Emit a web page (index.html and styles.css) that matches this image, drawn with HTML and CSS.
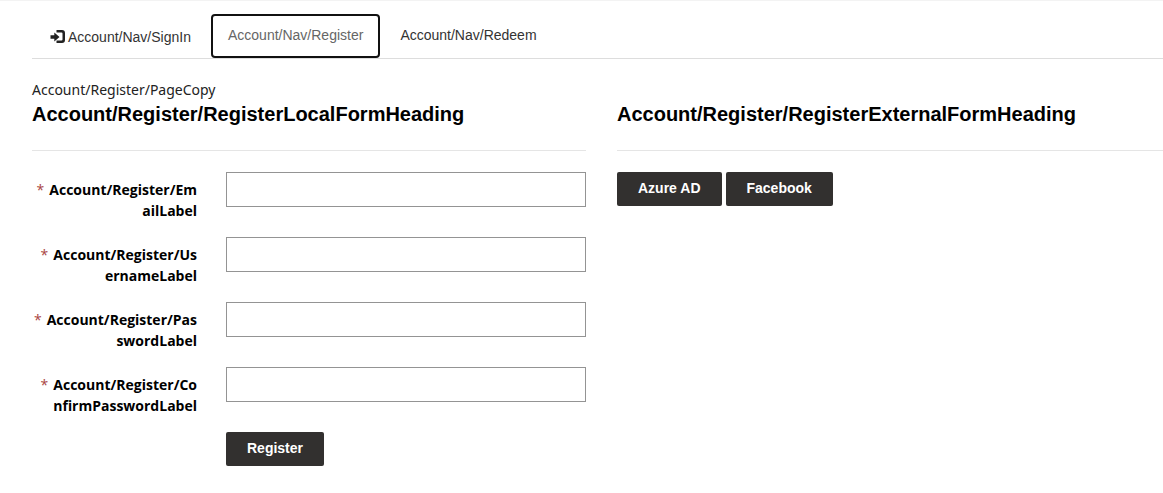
FILE: index.html
```html
<!DOCTYPE html>
<html lang="en">
<head>
<meta charset="utf-8">
<title>Register</title>
<link rel="stylesheet" href="styles.css">
</head>
<body>
<main class="page">
  <nav class="tabs">
    <a class="tab tab-signin" href="#signin"><svg class="icon" viewBox="0 0 16 14" aria-hidden="true"><path d="M.5 5.200h3.800V2.500L9.500 7 4.300 11.500V8.800H.5z"/><path d="M6.500 0H12q3 0 3 3v7q0 3-3 3H6.500v-2.400H11.500q1 0 1-1v-6q0-1-1-1H6.500z"/></svg><span>Account/Nav/SignIn</span></a>
    <a class="tab tab-active" href="#register" aria-current="page">Account/Nav/Register</a>
    <a class="tab" href="#redeem">Account/Nav/Redeem</a>
  </nav>
  <p class="copy">Account/Register/PageCopy</p>
  <div class="columns">
    <form class="local">
      <h2 class="heading">Account/Register/RegisterLocalFormHeading</h2>
      <div class="field">
        <label class="label" for="email">Account/Register/Em<br>ailLabel</label>
        <input class="input" id="email" type="email">
      </div>
      <div class="field">
        <label class="label" for="username">Account/Register/Us<br>ernameLabel</label>
        <input class="input" id="username" type="text">
      </div>
      <div class="field">
        <label class="label" for="password">Account/Register/Pas<br>swordLabel</label>
        <input class="input" id="password" type="password">
      </div>
      <div class="field">
        <label class="label" for="confirm">Account/Register/Co<br>nfirmPasswordLabel</label>
        <input class="input" id="confirm" type="password">
      </div>
      <div class="actions"><button class="button" type="button">Register</button></div>
    </form>
    <section class="external">
      <h2 class="heading">Account/Register/RegisterExternalFormHeading</h2>
      <div class="providers">
        <button class="button" type="button">Azure AD</button>
        <button class="button" type="button">Facebook</button>
      </div>
    </section>
  </div>
</main>
</body>
</html>
```
FILE: styles.css
```css
* { box-sizing: border-box; }
body {
  margin: 0;
  border-top: 1px solid #f3f3f3;
  background: #fff;
  color: #000;
  font: 14px/21px "Noto Sans", "Open Sans", sans-serif;
}
.page { padding: 13px 0 24px 32px; }
.tabs {
  display: flex;
  border-bottom: 1px solid #ddd;
  font: 14px/20px "Liberation Sans", Arial, sans-serif;
}
.tab {
  display: flex;
  align-items: center;
  height: 44px;
  padding: 0 20px 2px;
  color: #333;
  text-decoration: none;
}
.tab-signin { gap: 2px; padding: 2px 20px 0 18px; }
.tab-active {
  padding: 0 15px 2px;
  border: 2px solid #111;
  border-radius: 4px;
  color: #666;
}
.icon { width: 16px; height: 14px; fill: #222; }
.copy { margin: 20px 0 0; color: #222; }
.columns {
  display: grid;
  grid-template-columns: 554fr 546fr;
  column-gap: 31px;
}
.heading {
  margin: 0 0 21px;
  padding: 3px 0 25px;
  border-bottom: 1px solid #e5e5e5;
  font: bold 20px/22px "Liberation Sans", Arial, sans-serif;
}
.field {
  display: grid;
  grid-template-columns: 165px 1fr;
  column-gap: 29px;
  margin-bottom: 16px;
}
.label {
  padding-top: 7px;
  font-family: "Open Sans", "Noto Sans", sans-serif;
  font-weight: 700;
  text-align: right;
  white-space: nowrap;
}
.label::before {
  content: "*";
  margin-right: 5px;
  color: #a94442;
  font-weight: 400;
}
.input {
  width: 100%;
  height: 35px;
  padding: 6px 12px;
  border: 1px solid #949494;
  border-radius: 0;
  background: #fff;
  font: inherit;
}
.actions { padding-left: 194px; }
.providers { display: flex; gap: 4px; }
.button {
  height: 34px;
  padding: 0 21px 2px;
  border: 0;
  border-radius: 2px;
  background: #32302f;
  color: #fff;
  font: bold 14px/20px "Liberation Sans", Arial, sans-serif;
}
```
